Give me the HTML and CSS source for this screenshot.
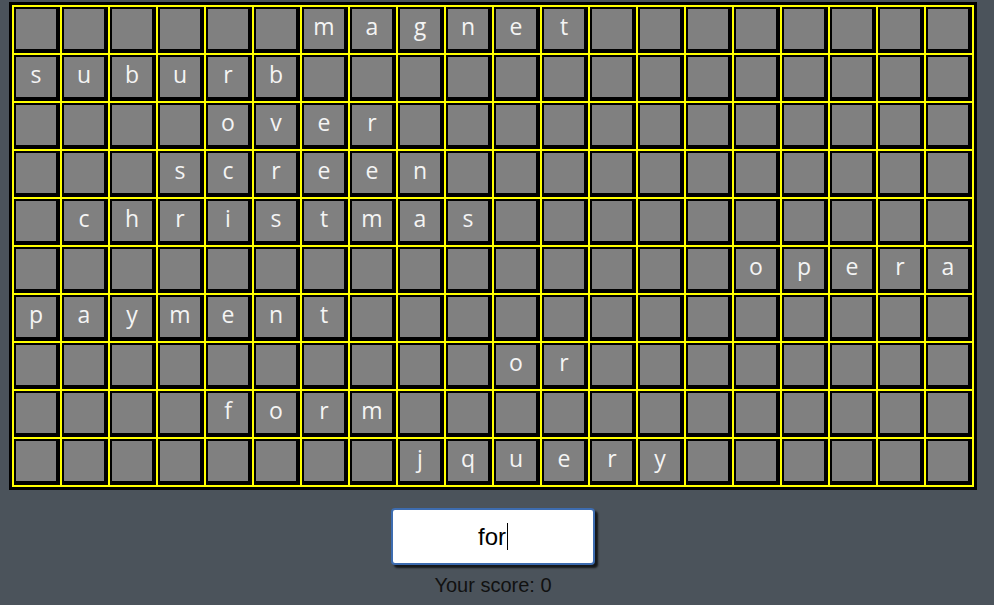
FILE: index.html
```html
<!DOCTYPE html>
<html>
<head>
<meta charset="utf-8">
<link rel="stylesheet" href="styles.css">
</head>
<body>
<div class="wrap">
  <div class="board">
    <div class="grid" id="grid"></div>
  </div>
  <div class="field"><span class="typed">for</span><span class="caret"></span></div>
  <div class="score">Your score: 0</div>
</div>
<script>
var rows = [
  [6, "magnet"],
  [0, "suburb"],
  [4, "over"],
  [3, "screen"],
  [1, "christmas"],
  [15, "opera"],
  [0, "payment"],
  [10, "or"],
  [4, "form"],
  [8, "jquery"]
];
var grid = document.getElementById("grid");
for (var r = 0; r < 10; r++) {
  for (var c = 0; c < 20; c++) {
    var cell = document.createElement("div");
    cell.className = "cell";
    var sq = document.createElement("div");
    sq.className = "sq";
    var start = rows[r][0], word = rows[r][1];
    if (c >= start && c < start + word.length) sq.textContent = word[c - start];
    cell.appendChild(sq);
    grid.appendChild(cell);
  }
}
</script>
</body>
</html>
```
FILE: styles.css
```css
html, body {
  margin: 0;
  padding: 0;
  background: #4b535b;
}
body {
  padding: 2px 0 0 10px;
}
.wrap {
  width: 966px;
  display: flex;
  flex-direction: column;
  align-items: center;
}
.board {
  background: #000;
  padding: 3px;
}
.grid {
  display: grid;
  grid-template-columns: repeat(20, 46px);
  grid-auto-rows: 46px;
  gap: 2px;
  background: #ffff00;
  border: 2px solid #ffff00;
}
.cell {
  background: #000;
  padding: 2px 4px 4px 2px;
}
.sq {
  width: 40px;
  height: 40px;
  background: #808080;
  color: #f4f4f4;
  font-family: "Open Sans", "DejaVu Sans", sans-serif;
  font-size: 23px;
  line-height: 35px;
  text-align: center;
}
.field {
  margin-top: 18px;
  width: 200px;
  height: 53px;
  box-sizing: content-box;
  background: #fff;
  border: 2px solid #3d6cb0;
  border-radius: 4px;
  box-shadow: 3px 3px 2px #15181b;
  display: flex;
  align-items: center;
  justify-content: center;
  font-family: "Liberation Sans", Arial, sans-serif;
  font-size: 24px;
  color: #000;
}
.caret {
  width: 1px;
  height: 27px;
  background: #000;
  margin-left: 1px;
}
.score {
  margin-top: 9px;
  font-family: "Liberation Sans", Arial, sans-serif;
  font-size: 20px;
  color: #111;
}
```
